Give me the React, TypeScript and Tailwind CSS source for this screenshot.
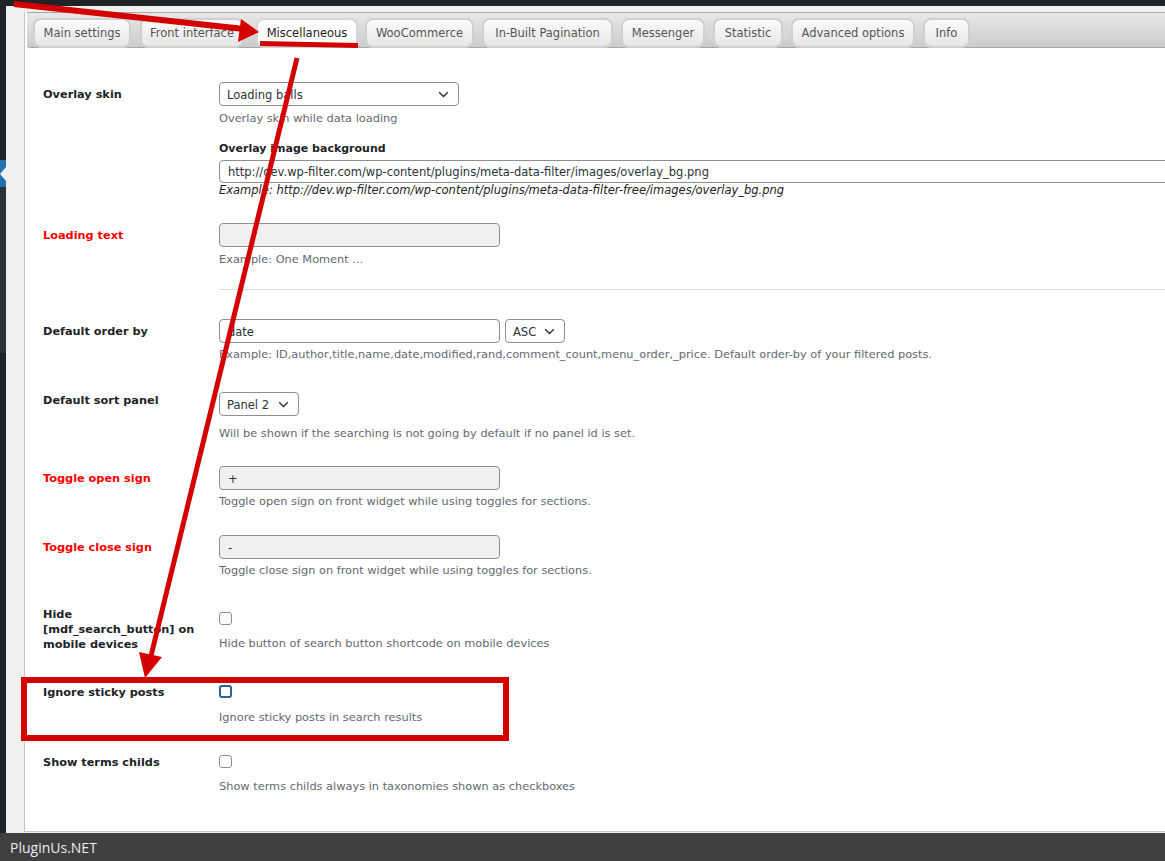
import React from "react";

const FONT = "[font-family:'DejaVu_Sans',sans-serif]";

const Chevron = () => (
  <svg width="11" height="7" viewBox="0 0 11 7" fill="none">
    <path d="M1.2 1.2 5.5 5.5 9.8 1.2" stroke="#2c3338" strokeWidth="1.4" />
  </svg>
);

const tabs: { label: string; cls: string; active?: boolean }[] = [
  { label: "Main settings", cls: "w-[98px] ml-[6px]" },
  { label: "Front interface", cls: "w-[104px] ml-[9px]" },
  { label: "Miscellaneous", cls: "w-[102px] ml-[12px]", active: true },
  { label: "WooCommerce", cls: "w-[109px] ml-[7px]" },
  { label: "In-Built Pagination", cls: "w-[131px] ml-[8px]" },
  { label: "Messenger", cls: "w-[84px] ml-[8px]" },
  { label: "Statistic", cls: "w-[70px] ml-[8px]" },
  { label: "Advanced options", cls: "w-[124px] ml-[8px]" },
  { label: "Info", cls: "w-[47px] ml-[8px]" },
];

const Label = ({ children, red, cls = "" }: { children: React.ReactNode; red?: boolean; cls?: string }) => (
  <div className={`w-[194px] shrink-0 pl-[18px] text-[11.3px] leading-[15px] font-bold ${red ? "text-[#ff0000]" : "text-[#1d2327]"} ${cls}`}>
    {children}
  </div>
);

const Desc = ({ children, cls = "" }: { children: React.ReactNode; cls?: string }) => (
  <div className={`text-[11.35px] leading-[15px] text-[#646970] whitespace-nowrap ${cls}`}>{children}</div>
);

const TextInput = ({ value, gray, cls = "" }: { value: string; gray?: boolean; cls?: string }) => (
  <div
    className={`h-[24px] w-[281px] rounded-[4px] border border-[#8c8f94] flex items-center px-[8px] pt-[3px] text-[11.5px] text-[#2c3338] ${gray ? "bg-[#f0f0f1]" : "bg-white"} ${cls}`}
  >
    {value}
  </div>
);

const Select = ({ value, cls }: { value: string; cls: string }) => (
  <div
    className={`h-[24px] rounded-[4px] border border-[#8c8f94] bg-white flex items-center justify-between pl-[7px] pr-[9px] text-[11.5px] text-[#2c3338] ${cls}`}
  >
    <span className="pt-[3px]">{value}</span>
    <Chevron />
  </div>
);

const Checkbox = ({ focus, cls = "" }: { focus?: boolean; cls?: string }) => (
  <div
    className={`w-[13px] h-[13px] rounded-[3px] bg-white ${focus ? "border-2 border-[#2f5f93]" : "border border-[#8c8f94]"} ${cls}`}
  />
);

export default function App() {
  return (
    <div className={`relative w-[1165px] h-[861px] overflow-hidden flex flex-col bg-[#f0f0f1] ${FONT}`}>
      {/* admin top bar */}
      <div className="h-[6px] shrink-0 bg-[#1d2327]" />

      <div className="flex flex-1 min-h-0">
        {/* sidebar sliver */}
        <div className="w-[6px] shrink-0 flex flex-col">
          <div className="h-[154px] bg-[#1d2327]" />
          <div className="h-[27px] bg-[#2271b1] flex items-center justify-end">
            <div className="w-0 h-0 border-y-[7px] border-y-transparent border-r-[6px] border-r-[#f0f0f1]" />
          </div>
          <div className="h-[166px] bg-[#2c3338]" />
          <div className="flex-1 bg-[#1d2327]" />
        </div>

        {/* gutter */}
        <div className="w-[18px] shrink-0 bg-[#f0f0f1]" />

        {/* main panel */}
        <div className="flex-1 min-w-0 pt-[6px] pb-[1px] flex flex-col">
          <div className="flex-1 bg-white border-l border-b border-[#c3c4c7] flex flex-col">
            {/* tab bar */}
            <div className="ml-[2px] h-[36px] shrink-0 border-y border-[#a7a7a7] rounded-bl-[3px] bg-linear-to-b from-[#e8e8e8] to-[#cbcbcb] flex items-end">
              {tabs.map((t) => (
                <div
                  key={t.label}
                  className={`${t.cls} h-[30px] mb-[-1px] pt-[2px] shrink-0 rounded-[8px] border-2 flex items-center justify-center text-[11.5px] whitespace-nowrap ${
                    t.active
                      ? "bg-white border-[#d6d6d6] text-[#222]"
                      : "bg-linear-to-b from-[#fbfbfb] to-[#e6e6e6] border-[#d0d0d0] text-[#555]"
                  }`}
                >
                  {t.label}
                </div>
              ))}
            </div>

            {/* form rows */}
            <div className="pt-[34px] flex flex-col">
              {/* Overlay skin */}
              <div className="flex h-[141px]">
                <Label cls="pt-[5px]">Overlay skin</Label>
                <div className="flex-1 min-w-0">
                  <Select value="Loading balls" cls="w-[240px]" />
                  <Desc cls="mt-[5px]">Overlay skin while data loading</Desc>
                  <div className="mt-[15px] text-[11px] leading-[15px] font-bold text-[#1d2327]">Overlay image background</div>
                  <div className="mt-[4px] h-[23px] w-[1000px] rounded-l-[4px] border border-[#8c8f94] flex items-center px-[8px] pt-[2px] text-[11.5px] text-[#2c3338] whitespace-nowrap">
                    http://dev.wp-filter.com/wp-content/plugins/meta-data-filter/images/overlay_bg.png
                  </div>
                  <div className="text-[11.5px] leading-[15px] italic text-[#1d2327] whitespace-nowrap">
                    Example: http://dev.wp-filter.com/wp-content/plugins/meta-data-filter-free/images/overlay_bg.png
                  </div>
                </div>
              </div>

              {/* Loading text */}
              <div className="flex h-[66px]">
                <Label red cls="pt-[5px]">Loading text</Label>
                <div className="flex-1 min-w-0">
                  <TextInput value="" gray />
                  <Desc cls="mt-[5px]">Example: One Moment ...</Desc>
                </div>
              </div>

              {/* separator */}
              <div className="flex h-[30px]">
                <div className="w-[194px] shrink-0" />
                <div className="flex-1 border-t border-[#dcdcde]" />
              </div>

              {/* Default order by */}
              <div className="flex h-[73px]">
                <Label cls="pt-[5px]">Default order by</Label>
                <div className="flex-1 min-w-0">
                  <div className="flex">
                    <TextInput value="date" />
                    <Select value="ASC" cls="ml-[5px] w-[60px]" />
                  </div>
                  <Desc cls="mt-[4px]">
                    Example: ID,author,title,name,date,modified,rand,comment_count,menu_order,_price. Default order-by of your filtered posts.
                  </Desc>
                </div>
              </div>

              {/* Default sort panel */}
              <div className="flex h-[74px]">
                <Label cls="pt-[1px]">Default sort panel</Label>
                <div className="flex-1 min-w-0">
                  <Select value="Panel 2" cls="w-[80px]" />
                  <Desc cls="mt-[10px]">Will be shown if the searching is not going by default if no panel id is set.</Desc>
                </div>
              </div>

              {/* Toggle open sign */}
              <div className="flex h-[69px]">
                <Label red cls="pt-[5px]">Toggle open sign</Label>
                <div className="flex-1 min-w-0">
                  <TextInput value="+" gray />
                  <Desc cls="mt-[4px]">Toggle open sign on front widget while using toggles for sections.</Desc>
                </div>
              </div>

              {/* Toggle close sign */}
              <div className="flex h-[72px]">
                <Label red cls="pt-[5px]">Toggle close sign</Label>
                <div className="flex-1 min-w-0">
                  <TextInput value="-" gray />
                  <Desc cls="mt-[4px]">Toggle close sign on front widget while using toggles for sections.</Desc>
                </div>
              </div>

              {/* Hide search button */}
              <div className="flex h-[78px]">
                <Label>
                  Hide
                  <br />
                  [mdf_search_button] on
                  <br />
                  mobile devices
                </Label>
                <div className="flex-1 min-w-0">
                  <Checkbox cls="mt-[5px]" />
                  <Desc cls="mt-[11px]">Hide button of search button shortcode on mobile devices</Desc>
                </div>
              </div>

              {/* Ignore sticky posts */}
              <div className="flex h-[70px]">
                <Label>Ignore sticky posts</Label>
                <div className="flex-1 min-w-0">
                  <Checkbox focus />
                  <Desc cls="mt-[12px]">Ignore sticky posts in search results</Desc>
                </div>
              </div>

              {/* Show terms childs */}
              <div className="flex">
                <Label>Show terms childs</Label>
                <div className="flex-1 min-w-0">
                  <Checkbox />
                  <Desc cls="mt-[11px]">Show terms childs always in taxonomies shown as checkboxes</Desc>
                </div>
              </div>
            </div>
          </div>
        </div>
      </div>

      {/* footer */}
      <div className="h-[28px] shrink-0 bg-[#404040] flex items-center pl-[10px] text-[14px] text-[#ececec] [font-family:'Open_Sans',sans-serif]">
        PluginUs.NET
      </div>

      {/* annotation overlay */}
      <svg className="absolute inset-0 pointer-events-none" width="1165" height="861" viewBox="0 0 1165 861">
        <line x1="14" y1="4" x2="244" y2="29" stroke="#d40000" strokeWidth="6" />
        <polygon points="259,32 241,19 238,42" fill="#d40000" />
        <polygon points="260,41 358,43 358,48 260,46" fill="#d40000" />
        <line x1="297" y1="58" x2="150" y2="660" stroke="#d40000" strokeWidth="5" />
        <polygon points="145,678 139,652 162,657" fill="#d40000" />
        <rect x="24" y="680" width="482" height="58" fill="none" stroke="#d40000" strokeWidth="6" />
      </svg>
    </div>
  );
}
